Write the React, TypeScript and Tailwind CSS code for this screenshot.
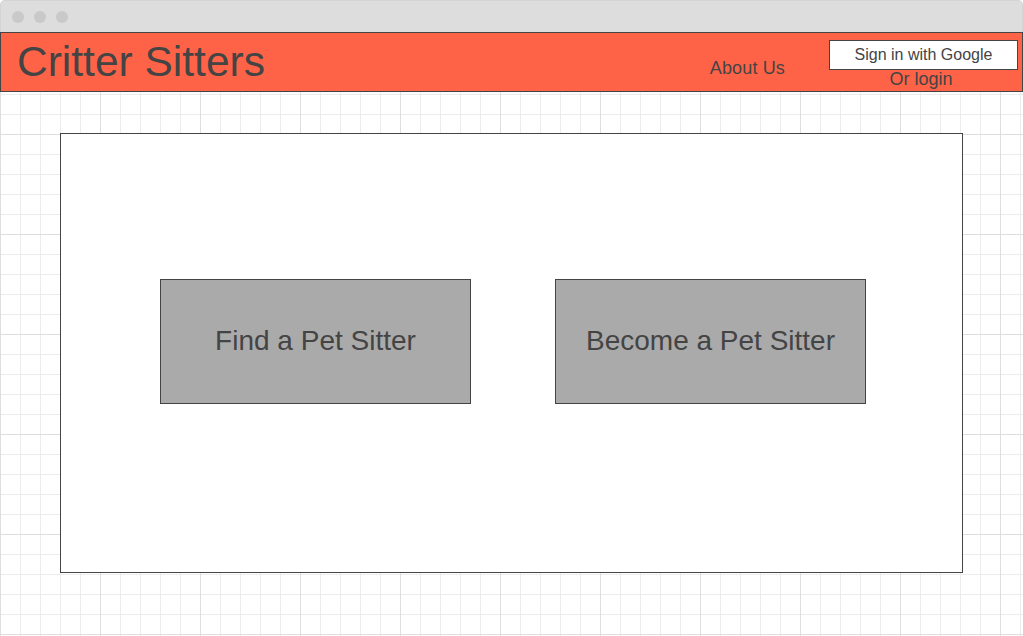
export default function App() {
  return (
    <div className="flex h-[636px] w-[1023px] flex-col overflow-hidden bg-white font-['Liberation_Sans',Arial,sans-serif] text-[#444444]">
      {/* browser chrome */}
      <div className="flex h-8 shrink-0 items-center gap-[10px] rounded-t-[5px] border border-b-0 border-[#d4d4d4] bg-[#dddddd] pl-[11px]">
        <span className="h-3 w-3 rounded-full bg-[#c9c9c9]" />
        <span className="h-3 w-3 rounded-full bg-[#c9c9c9]" />
        <span className="h-3 w-3 rounded-full bg-[#c9c9c9]" />
      </div>

      <div className="flex-1 bg-[linear-gradient(to_right,#dedede_1px,transparent_1px),linear-gradient(to_bottom,#dedede_1px,transparent_1px),linear-gradient(to_right,#ececec_1px,transparent_1px),linear-gradient(to_bottom,#ececec_1px,transparent_1px)] bg-[size:100px_100px,100px_100px,20px_20px,20px_20px] bg-[position:0_2px]">
        <header className="flex h-[60px] items-start border border-[#444444] bg-[#ff6347]">
          <h1 className="mt-[8px] pl-[16px] text-[42.5px] leading-[42px] font-normal">Critter Sitters</h1>
          <a className="ml-auto mt-[26px] text-[18px] leading-[18px] tracking-[0.15px]">About Us</a>
          <div className="ml-[44px] mr-[4px] mt-[7px] flex w-[189px] flex-col items-center">
            <button className="h-[30px] w-full border border-[#444444] bg-white text-[16px] text-[#444444]">
              Sign in with Google
            </button>
            <span className="-ml-[5px] text-[18px] leading-[18px]">Or login</span>
          </div>
        </header>

        <main className="ml-[60px] mt-[41px] h-[440px] w-[903px] border border-[#444444] bg-white">
          <div className="ml-[99px] mt-[145px] flex gap-[84px]">
            <div className="flex h-[125px] w-[311px] items-center justify-center border border-[#444444] bg-[#aaaaaa] pb-px text-[28px]">
              Find a Pet Sitter
            </div>
            <div className="flex h-[125px] w-[311px] items-center justify-center border border-[#444444] bg-[#aaaaaa] pb-px text-[28px]">
              Become a Pet Sitter
            </div>
          </div>
        </main>
      </div>
    </div>
  );
}
